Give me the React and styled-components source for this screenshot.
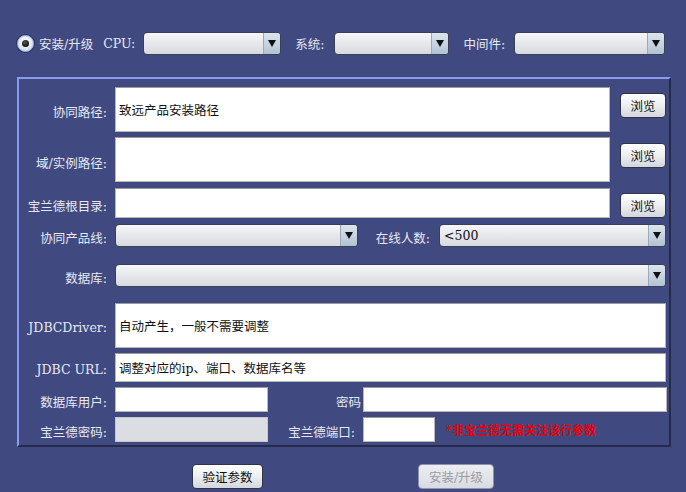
import React from "react";
import styled, { createGlobalStyle } from "styled-components";

const Global = createGlobalStyle`
  html, body { margin: 0; padding: 0; background: #404a80; }
  body { width: 686px; height: 492px; overflow: hidden; font-family: "DejaVu Serif", "Noto Sans CJK SC", serif; }
`;

const Page = styled.div`
  width: 686px;
  height: 492px;
  background: #404a80;
  padding-top: 32px;
  box-sizing: border-box;
`;

const TopBar = styled.div`
  display: flex;
  align-items: center;
  height: 23px;
  padding-left: 17px;
`;

const Radio = styled.span`
  width: 15px;
  height: 15px;
  border-radius: 50%;
  border: 1px solid #9fb6d8;
  background: radial-gradient(circle at 50% 40%, #ffffff 0%, #dfe6f0 60%, #b9c7da 100%);
  display: flex;
  align-items: center;
  justify-content: center;
  margin-right: 5px;
  box-shadow: 0 0 0 1px #2c3566;
  &::after {
    content: "";
    width: 7px;
    height: 7px;
    border-radius: 50%;
    background: radial-gradient(circle at 40% 35%, #555 0%, #111 70%);
  }
`;

const Text = styled.span`
  color: #e6e8f2;
  font-size: 12.5px;
  white-space: nowrap;
  margin-left: ${(p) => p.$ml || 0}px;
  margin-right: ${(p) => p.$mr || 0}px;
`;

const ComboBox = styled.div`
  width: ${(p) => p.$w}px;
  height: 23px;
  box-sizing: border-box;
  border: 1px solid #3a3f55;
  border-radius: 4px;
  background: linear-gradient(#f6f7f9, #e4e6ea 55%, #d7dade);
  display: flex;
  align-items: stretch;
  overflow: hidden;
  flex-shrink: 0;
`;

const ComboValue = styled.div`
  flex: 1;
  display: flex;
  align-items: center;
  padding-left: 4px;
  font-size: 12.5px;
  color: #111;
`;

const ComboArrow = styled.div`
  width: 16px;
  border-left: 1px solid #9aa8b8;
  background: linear-gradient(#dbe5ee, #c3d1de 60%, #b2c2d2);
  display: flex;
  align-items: center;
  justify-content: center;
  &::after {
    content: "";
    border-left: 4px solid transparent;
    border-right: 4px solid transparent;
    border-top: 7px solid #111;
  }
`;

const Combo = ({ w, value }) => (
  <ComboBox $w={w}>
    <ComboValue>{value}</ComboValue>
    <ComboArrow />
  </ComboBox>
);

const Panel = styled.div`
  margin: 22px 0 0 17px;
  width: 654px;
  height: 370px;
  box-sizing: border-box;
  border-top: 2px solid #8a9cf0;
  border-left: 2px solid #8a9cf0;
  border-right: 2px solid #262b4c;
  border-bottom: 2px solid #262b4c;
  padding-top: 8px;
`;

const Row = styled.div`
  display: flex;
  align-items: flex-start;
  height: ${(p) => p.$h}px;
  margin-top: ${(p) => p.$mt || 0}px;
`;

const Label = styled.div`
  width: ${(p) => p.$w || 96}px;
  flex-shrink: 0;
  box-sizing: border-box;
  padding-right: ${(p) => (p.$pr === undefined ? 8 : p.$pr)}px;
  text-align: right;
  color: #e6e8f2;
  font-size: 12.5px;
  white-space: nowrap;
  align-self: center;
  padding-top: ${(p) => p.$pt || 3}px;
`;

const Field = styled.div`
  width: ${(p) => p.$w}px;
  height: 100%;
  flex-shrink: 0;
  box-sizing: border-box;
  background: ${(p) => (p.$disabled ? "#dcdde2" : "#fff")};
  border: 1px solid ${(p) => (p.$disabled ? "#c6c7cc" : "#b8b8b8")};
  border-top-color: ${(p) => (p.$disabled ? "#c6c7cc" : "#9a9a9a")};
  display: flex;
  align-items: center;
  padding-left: 3px;
  font-size: 12.5px;
  color: #111;
  white-space: nowrap;
`;

const Button = styled.div`
  width: ${(p) => p.$w}px;
  height: 25px;
  box-sizing: border-box;
  margin-top: ${(p) => p.$mt || 0}px;
  margin-left: ${(p) => p.$ml || 0}px;
  border: 1px solid ${(p) => (p.$disabled ? "#8d93ad" : "#2f3448")};
  border-radius: 4px;
  background: ${(p) =>
    p.$disabled
      ? "linear-gradient(#eceef2, #d8dbe2)"
      : "linear-gradient(#ffffff, #eceef1 50%, #d3d6db)"};
  color: ${(p) => (p.$disabled ? "#9a9ca4" : "#111")};
  font-size: 12.5px;
  display: flex;
  align-items: center;
  justify-content: center;
  flex-shrink: 0;
`;

const Hint = styled.span`
  color: #e8000a;
  font-size: 12px;
  font-weight: bold;
  margin-left: 11px;
  align-self: center;
  white-space: nowrap;
`;

const Footer = styled.div`
  display: flex;
  padding: 17px 0 0 192px;
`;

export default function App() {
  return (
    <Page>
      <Global />
      <TopBar>
        <Radio />
        <Text>安装/升级</Text>
        <Text $ml={10} $mr={8}>CPU:</Text>
        <Combo w={138} />
        <Text $ml={14} $mr={9}>系统:</Text>
        <Combo w={115} />
        <Text $ml={15} $mr={9}>中间件:</Text>
        <Combo w={151} />
      </TopBar>

      <Panel>
        <Row $h={45}>
          <Label>协同路径:</Label>
          <Field $w={495}>致远产品安装路径</Field>
          <Button $w={46} $mt={6} $ml={10}>浏览</Button>
        </Row>
        <Row $h={45} $mt={5}>
          <Label $pt={6}>域/实例路径:</Label>
          <Field $w={495} />
          <Button $w={46} $mt={6} $ml={10}>浏览</Button>
        </Row>
        <Row $h={30} $mt={6}>
          <Label $pt={5}>宝兰德根目录:</Label>
          <Field $w={495} />
          <Button $w={46} $mt={5} $ml={10}>浏览</Button>
        </Row>
        <Row $h={23} $mt={6}>
          <Label>协同产品线:</Label>
          <Combo w={243} />
          <Label $w={81} $pr={9}>在线人数:</Label>
          <Combo w={227} value="<500" />
        </Row>
        <Row $h={23} $mt={17}>
          <Label>数据库:</Label>
          <Combo w={551} />
        </Row>
        <Row $h={45} $mt={16}>
          <Label>JDBCDriver:</Label>
          <Field $w={551}>自动产生，一般不需要调整</Field>
        </Row>
        <Row $h={29} $mt={5}>
          <Label>JDBC URL:</Label>
          <Field $w={551}>调整对应的ip、端口、数据库名等</Field>
        </Row>
        <Row $h={25} $mt={5}>
          <Label>数据库用户:</Label>
          <Field $w={153} />
          <Label $w={95} $pr={2}>密码</Label>
          <Field $w={304} />
        </Row>
        <Row $h={25} $mt={5}>
          <Label>宝兰德密码:</Label>
          <Field $w={153} $disabled />
          <Label $w={95} $pr={8}>宝兰德端口:</Label>
          <Field $w={72} />
          <Hint>*非宝兰德无需关注该行参数</Hint>
        </Row>
      </Panel>

      <Footer>
        <Button $w={71}>验证参数</Button>
        <Button $w={76} $ml={155} $disabled>安装/升级</Button>
      </Footer>
    </Page>
  );
}
